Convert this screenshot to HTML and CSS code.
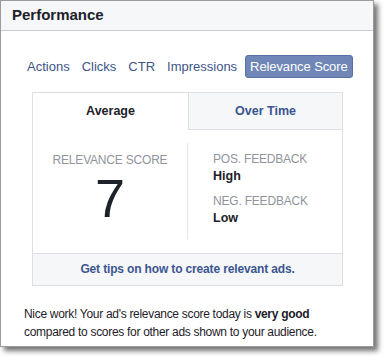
FILE: index.html
```html
<!DOCTYPE html>
<html lang="en">
<head>
    <meta charset="UTF-8">
    <meta name="viewport" content="width=device-width, initial-scale=1.0">
    <title>Performance</title>
    <link rel="stylesheet" href="styles.css">
</head>
<body>
    <!-- Performance panel -->
    <div class="panel">
        <div class="panel-header">Performance</div>

        <div class="panel-body">
            <!-- Metric switcher -->
            <div class="metric-tabs">
                <a href="#" class="metric-tab">Actions</a>
                <a href="#" class="metric-tab">Clicks</a>
                <a href="#" class="metric-tab">CTR</a>
                <a href="#" class="metric-tab">Impressions</a>
                <a href="#" class="metric-tab active">Relevance Score</a>
            </div>

            <!-- Score card -->
            <div class="score-card">
                <div class="card-tabs">
                    <div class="card-tab active">Average</div>
                    <div class="card-tab">Over Time</div>
                </div>

                <div class="card-content">
                    <div class="score-col">
                        <div class="label">RELEVANCE SCORE</div>
                        <div class="score">7</div>
                    </div>
                    <div class="feedback-col">
                        <div class="label">POS. FEEDBACK</div>
                        <div class="value">High</div>
                        <div class="label neg">NEG. FEEDBACK</div>
                        <div class="value">Low</div>
                    </div>
                </div>

                <a href="#" class="card-footer">Get tips on how to create relevant ads.</a>
            </div>

            <p class="summary">Nice work! Your ad's relevance score today is <b>very good</b> compared to scores for other ads shown to your audience.</p>
        </div>
    </div>
</body>
</html>
```

FILE: styles.css
```css
/* Reset and base styles */
* {
    margin: 0;
    padding: 0;
    box-sizing: border-box;
}

body {
    width: 384px;
    height: 356px;
    overflow: hidden;
    background: #fff;
    color: #1d2129;
    font-family: "Liberation Sans", Arial, sans-serif;
}

/* Outer panel */
.panel {
    width: 374px;
    height: 347px;
    border: 1px solid #9c9c9c;
    background: #fff;
    box-shadow: 4px 4px 5px rgba(0, 0, 0, 0.55);
}

.panel-header {
    height: 30px;
    padding-left: 11px;
    line-height: 28px;
    font-size: 15px;
    font-weight: bold;
    background: #f6f7f9;
    border-bottom: 1px solid #c9ccd1;
}

.panel-body {
    padding: 24px 30px 0 31px;
}

/* Metric switcher */
.metric-tabs {
    display: flex;
    align-items: center;
    gap: 12px;
    margin-left: -5px;
    height: 23px;
}

.metric-tab {
    flex-shrink: 0;
    white-space: nowrap;
    color: #3e5488;
    text-decoration: none;
    font-size: 13px;
}

.metric-tab.active {
    margin-left: -4px;
    height: 23px;
    line-height: 21px;
    padding: 0 4px;
    letter-spacing: -0.1px;
    color: #fff;
    background: #6f86b6;
    border: 1px solid #5a70a2;
    border-radius: 3px;
}

/* Score card */
.score-card {
    margin-top: 14px;
    border: 1px solid #dddfe2;
}

.card-tabs {
    display: flex;
    height: 37px;
}

.card-tab {
    flex: 1;
    text-align: center;
    line-height: 36px;
    font-size: 12.5px;
    font-weight: bold;
    color: #3b5590;
    background: #f6f7f9;
    border-left: 1px solid #dddfe2;
    border-bottom: 1px solid #dddfe2;
}

.card-tab.active {
    flex: 0 0 155px;
    color: #1d2129;
    background: #fff;
    border: none;
}

.card-content {
    display: flex;
    height: 123px;
    padding: 13px 0 14px;
}

.label {
    font-size: 12px;
    letter-spacing: -0.2px;
    color: #90949c;
}

.score-col {
    flex: 0 0 155px;
    padding-top: 10px;
    text-align: center;
    border-right: 1px solid #e5e6e9;
}

.score {
    margin-top: 3px;
    font-size: 54px;
    line-height: 56px;
    color: #1d2129;
}

.feedback-col {
    padding: 9px 0 0 25px;
}

.value {
    margin-top: 3px;
    font-size: 12.5px;
    font-weight: bold;
}

.label.neg {
    margin-top: 11px;
}

.card-footer {
    display: block;
    height: 32px;
    line-height: 30px;
    text-align: center;
    font-size: 12px;
    letter-spacing: -0.15px;
    font-weight: bold;
    color: #3b5590;
    text-decoration: none;
    background: #f6f7f9;
    border-top: 1px solid #dddfe2;
}

/* Summary text */
.summary {
    margin: 19px 0 0 -8px;
    font-size: 12px;
    letter-spacing: -0.3px;
    line-height: 18px;
}
```
